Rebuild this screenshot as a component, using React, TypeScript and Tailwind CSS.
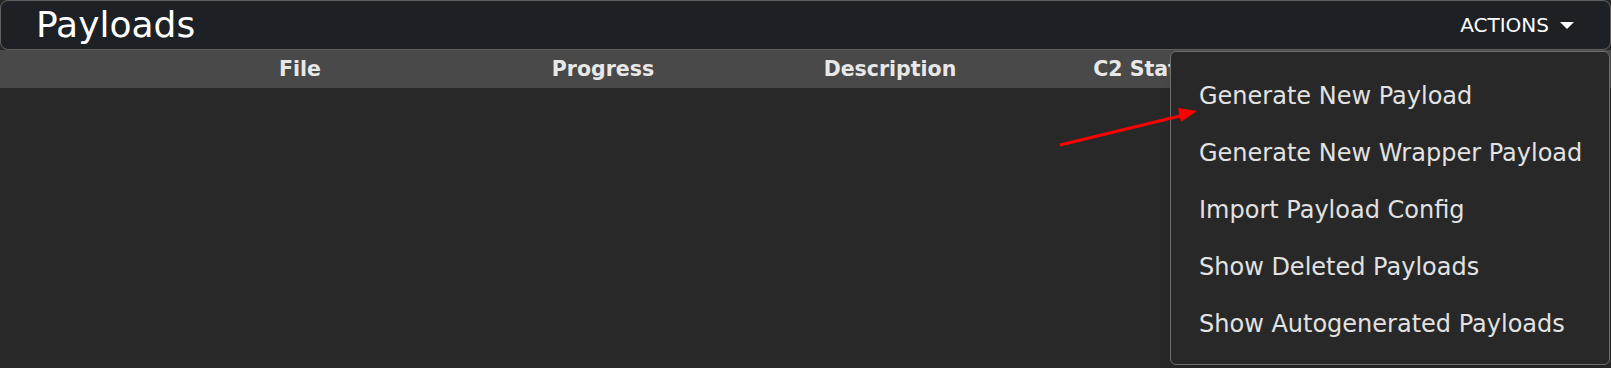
import { useState } from "react";

const columns = [
  { label: "", width: "w-[150px]" },
  { label: "File", width: "w-[300px]" },
  { label: "Progress", width: "w-[306px]" },
  { label: "Description", width: "w-[268px]" },
  { label: "C2 Status", width: "w-[250px]" },
];

const menuItems = [
  "Generate New Payload",
  "Generate New Wrapper Payload",
  "Import Payload Config",
  "Show Deleted Payloads",
  "Show Autogenerated Payloads",
];

const App = () => {
  const [open] = useState(true);

  return (
    <div className="relative w-[1611px] h-[368px] overflow-hidden bg-[#282828] font-['DejaVu_Sans',sans-serif]">
      {/* Header */}
      <div className="h-[50px] flex items-center justify-between rounded-lg border border-[#616161] bg-[#1d2025] pl-[35px] pr-[36px]">
        <h1 className="text-[36px] leading-none text-white">Payloads</h1>
        <button className="flex items-center gap-[11px] text-[20px] text-white">
          ACTIONS
          <svg width="14" height="7" viewBox="0 0 14 7">
            <path d="M0 0 L14 0 L7 7 Z" fill="#ffffff" />
          </svg>
        </button>
      </div>

      {/* Table header */}
      <div className="flex h-[38px] items-center bg-[#494949]">
        {columns.map((col, i) => (
          <div
            key={i}
            className={`${col.width} shrink-0 text-center text-[20.5px] font-bold text-[#e8e8e8]`}
          >
            {col.label}
          </div>
        ))}
      </div>

      {/* Actions menu */}
      {open && (
        <div className="absolute left-[1170px] top-[51px] w-[440px] rounded-md border border-[#6e6e6e] bg-[#282828] pt-4 pb-[11px] pl-[28px] shadow-lg">
          {menuItems.map((item) => (
            <div
              key={item}
              className="h-[57px] leading-[57px] text-[24px] text-[#e2e2e2] whitespace-nowrap"
            >
              {item}
            </div>
          ))}
        </div>
      )}

      {/* Red annotation arrow */}
      <svg
        className="absolute left-0 top-0 pointer-events-none"
        width="1611"
        height="368"
      >
        <line x1="1060" y1="145" x2="1184" y2="115" stroke="#ff0000" strokeWidth="3" />
        <path d="M1197 111 L1178 108 L1181 122 Z" fill="#ff0000" />
      </svg>
    </div>
  );
};

export default App;
